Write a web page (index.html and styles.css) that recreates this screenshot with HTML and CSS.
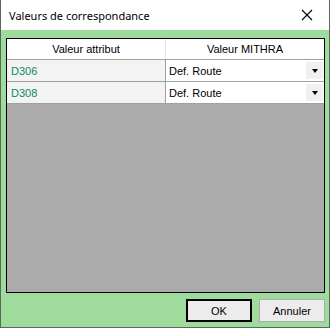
FILE: index.html
```html
<!DOCTYPE html>
<html lang="fr">
<head>
    <meta charset="UTF-8">
    <title>Valeurs de correspondance</title>
    <link rel="stylesheet" href="styles.css">
</head>
<body>
    <div class="window">
        <div class="titlebar">
            <span class="title">Valeurs de correspondance</span>
            <svg class="close" width="12" height="12" viewBox="0 0 12 12">
                <path d="M1 1 L11 11 M11 1 L1 11" stroke="#000" stroke-width="1.1" fill="none"/>
            </svg>
        </div>

        <div class="client">
            <div class="grid">
                <div class="row header">
                    <div class="cell left">Valeur attribut</div>
                    <div class="cell right">Valeur MITHRA</div>
                </div>
                <div class="row">
                    <div class="cell left attr">D306</div>
                    <div class="cell right combo">
                        <span>Def. Route</span>
                        <span class="drop"><span class="arrow"></span></span>
                    </div>
                </div>
                <div class="row">
                    <div class="cell left attr">D308</div>
                    <div class="cell right combo">
                        <span>Def. Route</span>
                        <span class="drop"><span class="arrow"></span></span>
                    </div>
                </div>
            </div>

            <div class="buttons">
                <button class="btn default">OK</button>
                <button class="btn">Annuler</button>
            </div>
        </div>
    </div>
</body>
</html>
```

FILE: styles.css
```css
body {
    margin: 0;
    font-family: "Liberation Sans", Arial, sans-serif;
    font-size: 11px;
    background-color: #9fdb9c;
}

.window {
    width: 330px;
    height: 328px;
    box-sizing: border-box;
    border: 1px solid #56695a;
    border-top: none;
    display: flex;
    flex-direction: column;
}

.titlebar {
    height: 30px;
    background-color: #fff;
    display: flex;
    align-items: center;
    justify-content: space-between;
    padding: 0 12px 0 8px;
}

.title {
    font-family: "Noto Sans", sans-serif;
    font-size: 11px;
    color: #000;
}

.close {
    display: block;
    margin-right: 4px;
}

/* Dialog client area */
.client {
    flex: 1;
    background-color: #9fdb9c;
    padding: 8px 4px 5px 5px;
    display: flex;
    flex-direction: column;
}

.grid {
    flex: 1;
    border: 1px solid #000;
    background-color: #ababab;
}

.row {
    display: flex;
    height: 21px;
    border-bottom: 1px solid #a0a0a0;
}

.row.header {
    height: 20px;
    background-color: #fff;
}

.cell {
    display: flex;
    align-items: center;
    box-sizing: border-box;
    color: #000;
}

.left {
    width: 159px;
    border-right: 1px solid #a0a0a0;
    background-color: #f3f3f3;
    padding-left: 4px;
}

.right {
    flex: 1;
    background-color: #fff;
    padding-left: 3px;
}

.header .cell {
    justify-content: center;
    background-color: #fff;
    padding: 0;
}

.header .left {
    border-right-color: #e3e3e3;
}

.attr {
    color: #0a8a5c;
}

.combo {
    justify-content: space-between;
    padding-right: 1px;
}

.drop {
    width: 17px;
    height: 17px;
    background-color: #f0f0f0;
    display: flex;
    align-items: center;
    justify-content: center;
}

.arrow {
    width: 0;
    height: 0;
    border-left: 3.5px solid transparent;
    border-right: 3.5px solid transparent;
    border-top: 4px solid #000;
}

.buttons {
    display: flex;
    justify-content: flex-end;
    gap: 6px;
    margin-top: 6px;
}

.btn {
    font-family: "Liberation Sans", Arial, sans-serif;
    font-size: 11px;
    width: 66px;
    height: 23px;
    background-color: #ececec;
    border: 1px solid #adadad;
    color: #000;
    padding: 0;
}

.btn.default {
    border: 2px solid #000;
    margin-right: 1px;
}
```
